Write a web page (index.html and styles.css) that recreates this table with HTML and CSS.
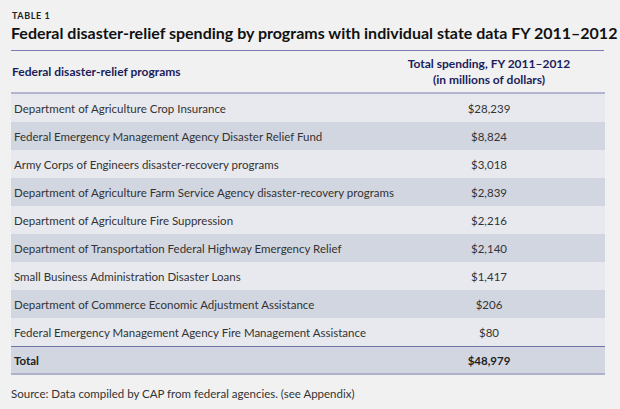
FILE: index.html
```html
<!DOCTYPE html>
<html>
<head>
<meta charset="utf-8">
<link rel="stylesheet" href="styles.css">
</head>
<body>
<div class="page">
  <div class="label">TABLE 1</div>
  <h1 class="title">Federal disaster-relief spending by programs with individual state data FY 2011–2012</h1>
  <table class="data">
    <thead>
      <tr>
        <th class="col-name">Federal disaster-relief programs</th>
        <th class="col-num">Total spending, FY 2011–2012<br>(in millions of dollars)</th>
      </tr>
    </thead>
    <tbody>
      <tr><td>Department of Agriculture Crop Insurance</td><td class="num">$28,239</td></tr>
      <tr><td>Federal Emergency Management Agency Disaster Relief Fund</td><td class="num">$8,824</td></tr>
      <tr><td>Army Corps of Engineers disaster-recovery programs</td><td class="num">$3,018</td></tr>
      <tr><td>Department of Agriculture Farm Service Agency disaster-recovery programs</td><td class="num">$2,839</td></tr>
      <tr><td>Department of Agriculture Fire Suppression</td><td class="num">$2,216</td></tr>
      <tr><td>Department of Transportation Federal Highway Emergency Relief</td><td class="num">$2,140</td></tr>
      <tr><td>Small Business Administration Disaster Loans</td><td class="num">$1,417</td></tr>
      <tr><td>Department of Commerce Economic Adjustment Assistance</td><td class="num">$206</td></tr>
      <tr><td>Federal Emergency Management Agency Fire Management Assistance</td><td class="num">$80</td></tr>
    </tbody>
    <tfoot>
      <tr><td>Total</td><td class="num">$48,979</td></tr>
    </tfoot>
  </table>
  <p class="source">Source: Data compiled by CAP from federal agencies. (see Appendix)</p>
</div>
</body>
</html>
```
FILE: styles.css
```css
html, body {
  margin: 0;
  padding: 0;
  background: #f1f1f1;
}
.page {
  width: 620px;
  height: 409px;
  box-sizing: border-box;
  padding: 11px 16px 0 11px;
  font-family: Lato, "Open Sans", sans-serif;
  color: #333;
  overflow: hidden;
}
.label {
  font-size: 9px;
  font-weight: 700;
  letter-spacing: 0.6px;
  color: #222;
  line-height: 9px;
  padding-left: 1px;
}
.title {
  margin: 0;
  padding: 4px 0 8px;
  font-size: 16px;
  font-weight: 700;
  color: #111;
  line-height: 18px;
  white-space: nowrap;
  border-bottom: 1px solid #7b7db2;
}
.data {
  width: 593px;
  border-collapse: collapse;
  table-layout: fixed;
  font-size: 11.5px;
}
.data th {
  font-weight: 700;
  color: #1b1d5c;
  height: 41px;
  padding: 0;
  border-bottom: 2px solid #b2b4d0;
  line-height: 16px;
  font-size: 12px;
}
.data th.col-name {
  text-align: left;
  padding-left: 1px;
  width: 393px;
}
.data th.col-num {
  text-align: center;
  width: 200px;
  padding-right: 32px;
  box-sizing: border-box;
}
.data td {
  height: 28px;
  padding: 0 0 0 3px;
  white-space: nowrap;
}
.data td.num {
  text-align: center;
  padding: 0 32px 0 0;
}
.data tbody tr:nth-child(odd) {
  background: #e7e9ee;
}
.data tbody tr:nth-child(even) {
  background: #d2d6e0;
}
.data tfoot tr {
  background: #d2d6e0;
  border-top: 1px solid #7173a8;
  border-bottom: 2px solid #aeb0cc;
}
.data tfoot td {
  font-weight: 700;
  color: #222;
  height: 26px;
}
.source {
  margin: 12px 0 0 0;
  font-size: 11.5px;
  color: #333;
}
```
